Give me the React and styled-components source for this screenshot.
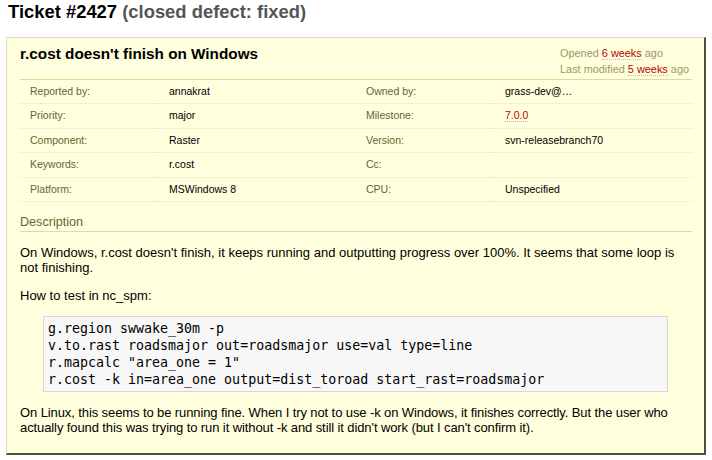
import React from "react";
import styled, { createGlobalStyle } from "styled-components";

const GlobalStyle = createGlobalStyle`
  html, body {
    margin: 0;
    padding: 0;
    background: #fff;
  }
  body {
    font-family: "Liberation Sans", Arial, sans-serif;
    color: #000;
  }
`;

const Page = styled.div`
  padding-top: 1px;
`;

const PageTitle = styled.h1`
  margin: 0 0 0 8px;
  font-size: 18.4px;
  line-height: 21px;
  font-weight: bold;
  color: #000;
`;

const Status = styled.span`
  color: #555;
`;

const Ticket = styled.div`
  margin: 15px 6px 0 6px;
  background: #ffd;
  border-style: solid;
  border-width: 1px 2px 2px 1px;
  border-color: #dcdccc #4f4f35 #4f4f35 #dcdccc;
  padding: 6px 12px 5px 13px;
`;

const Header = styled.div`
  display: flex;
  justify-content: space-between;
  align-items: flex-start;
`;

const Summary = styled.h2`
  margin: 0;
  font-size: 15.3px;
  line-height: 19px;
  font-weight: bold;
`;

const Dates = styled.div`
  margin-top: 2px;
  padding-right: 3px;
  color: #996;
  font-size: 10.9px;
  line-height: 15.5px;
`;

const Link = styled.a`
  color: #b00;
  text-decoration: none;
  border-bottom: 1px dotted #bbb;
`;

const Properties = styled.div`
  margin-top: 2px;
  display: grid;
  grid-template-columns: 139px 197px 139px 197px;
  border-top: 1px solid #dd9;
  font-size: 10.5px;
  line-height: 13.4px;
`;

const Cell = styled.div`
  padding: 5px 0 5px 10px;
  border-bottom: 1px dotted #e2e2c0;
  color: ${(p) => (p.$label ? "#663" : "#000")};
`;

const Description = styled.div`
  font-size: 13px;
  line-height: 15px;
`;

const DescTitle = styled.h3`
  margin: 13px 0 0 0;
  font-size: 12.6px;
  line-height: 15px;
  font-weight: normal;
  color: #663;
  border-bottom: 1px solid #dd9;
  padding-bottom: 1px;
`;

const Para = styled.p`
  margin: 13px 0;
  letter-spacing: ${(p) => (p.$tight ? "-0.1px" : "normal")};
`;

const Code = styled.pre`
  margin: 13px 24px 13px 23px;
  padding: 3px 4px;
  background: #f7f7f7;
  border: 1px solid #d7d7d7;
  font-family: "DejaVu Sans Mono", monospace;
  font-size: 13.3px;
  line-height: 17px;
  color: #000;
`;

const props = [
  ["Reported by:", "annakrat", "Owned by:", "grass-dev@…"],
  ["Priority:", "major", "Milestone:", "7.0.0"],
  ["Component:", "Raster", "Version:", "svn-releasebranch70"],
  ["Keywords:", "r.cost", "Cc:", ""],
  ["Platform:", "MSWindows 8", "CPU:", "Unspecified"],
];

const code = `g.region swwake_30m -p
v.to.rast roadsmajor out=roadsmajor use=val type=line
r.mapcalc "area_one = 1"
r.cost -k in=area_one output=dist_toroad start_rast=roadsmajor`;

export default function App() {
  return (
    <Page>
      <GlobalStyle />
      <PageTitle>
        Ticket #2427 <Status>(closed defect: fixed)</Status>
      </PageTitle>
      <Ticket>
        <Header>
          <Summary>r.cost doesn't finish on Windows</Summary>
          <Dates>
            <div>
              Opened <Link href="#">6 weeks</Link> ago
            </div>
            <div>
              Last modified <Link href="#">5 weeks</Link> ago
            </div>
          </Dates>
        </Header>
        <Properties>
          {props.map((row) =>
            row.map((v, i) => (
              <Cell key={row[0] + i} $label={i % 2 === 0}>
                {v === "7.0.0" ? <Link href="#">{v}</Link> : v || "\u00a0"}
              </Cell>
            ))
          )}
        </Properties>
        <Description>
          <DescTitle>Description</DescTitle>
          <Para>
            On Windows, r.cost doesn't finish, it keeps running and outputting
            progress over 100%. It seems that some loop is not finishing.
          </Para>
          <Para>How to test in nc_spm:</Para>
          <Code>{code}</Code>
          <Para $tight>
            On Linux, this seems to be running fine. When I try not to use -k on
            Windows, it finishes correctly. But the user who actually found this
            was trying to run it without -k and still it didn't work (but I
            can't confirm it).
          </Para>
        </Description>
      </Ticket>
    </Page>
  );
}
